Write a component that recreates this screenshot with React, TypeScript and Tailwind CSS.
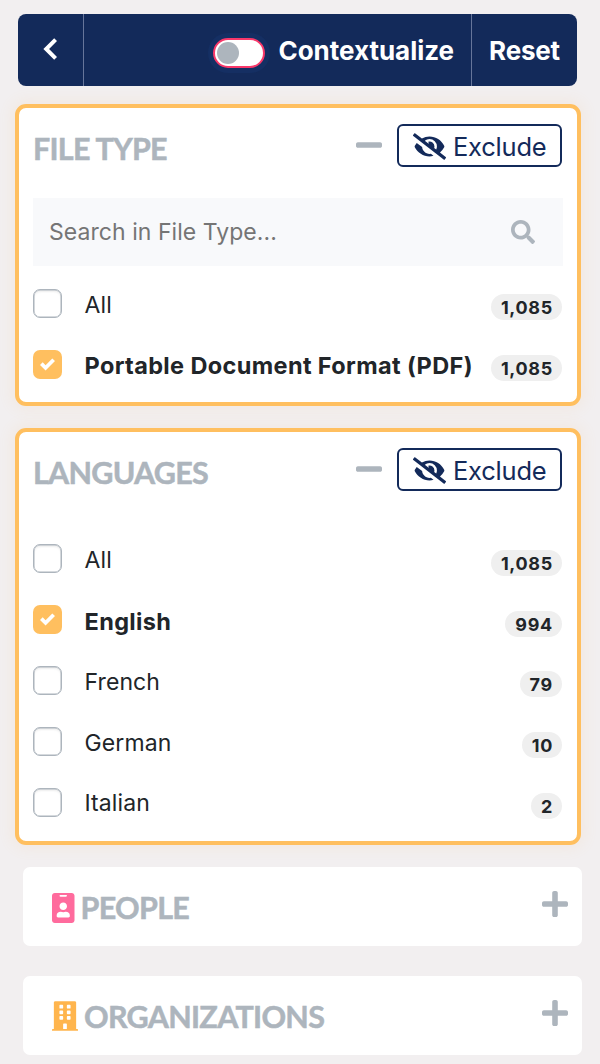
import React from 'react';
import { FaBuilding, FaEyeSlash, FaIdBadge, FaMinus, FaPlus, FaSearch } from 'react-icons/fa';

type Item = { label: string; count: string; checked?: boolean };

const fileTypes: Item[] = [
  { label: 'All', count: '1,085' },
  { label: 'Portable Document Format (PDF)', count: '1,085', checked: true },
];

const languages: Item[] = [
  { label: 'All', count: '1,085' },
  { label: 'English', count: '994', checked: true },
  { label: 'French', count: '79' },
  { label: 'German', count: '10' },
  { label: 'Italian', count: '2' },
];

function Toolbar() {
  return (
    <header className="ml-[18px] flex h-[72px] w-[559px] overflow-hidden rounded-[8px] bg-[#132a5a] text-[26px] font-bold text-white">
      <button className="flex w-[65px] items-center justify-center">
        <svg viewBox="0 0 14 22" className="mr-px mb-[2px] h-[22px] w-[14px]" fill="none">
          <path d="M12.6 1.6 3.2 11l9.4 9.4" stroke="currentColor" strokeWidth="4" />
        </svg>
      </button>
      <div className="flex flex-1 items-center justify-end border-x border-[#66759a] pr-[17px]">
        <span className="mt-[5px] mr-[13px] flex h-[30px] w-[52px] items-center rounded-full border-2 border-[#f9386a] bg-white pl-[2px] shadow-[0_0_0_5px_#152f63]">
          <span className="size-[22px] rounded-full bg-[#adb5bd]" />
        </span>
        <span className="mt-px tracking-[-0.02px]">Contextualize</span>
      </div>
      <button className="w-[105px] pt-px tracking-[-0.2px]">Reset</button>
    </header>
  );
}

function Row({ item }: { item: Item }) {
  return (
    <label className="flex h-[60.8px] items-center">
      {item.checked ? (
        <span className="flex size-[29px] items-center justify-center rounded-[7px] bg-[#ffbf5f]">
          <svg viewBox="0 0 8 8" className="size-[15px]">
            <path fill="#fff" d="M6.564.75 2.974 4.362 1.436 2.812 0 4.26 2.974 7.25 8 2.193z" />
          </svg>
        </span>
      ) : (
        <span className="size-[29px] rounded-[7px] border-[1.5px] border-[#adb5bd] bg-white shadow-[inset_0_0_0_0.5px_#adb5bd,inset_0_2px_2px_rgba(0,0,0,0.07)]" />
      )}
      <span
        className={
          item.checked
            ? 'mt-[3px] ml-[22.5px] text-[23.5px] font-bold tracking-[0.37px] whitespace-nowrap'
            : 'mt-[3px] ml-[22.5px] text-[23px] tracking-[0.1px] whitespace-nowrap'
        }
      >
        {item.label}
      </span>
      <span className="mt-[8px] mr-[0.5px] ml-auto flex h-[26px] items-center rounded-full bg-[#efefef] pr-[9px] pl-[10px] pt-px text-[18px] font-bold tracking-[0.7px]">
        {item.count}
      </span>
    </label>
  );
}

function PanelHeader({ title }: { title: string }) {
  return (
    <div className="flex h-[43px] items-center">
      <h2 className="mt-[5px] font-['Lato',sans-serif] text-[30.5px] leading-none font-bold tracking-[-0.75px] text-[#adb5bd] [-webkit-text-stroke:0.5px_#adb5bd]">
        {title}
      </h2>
      <FaMinus className="mb-px ml-auto h-[32px] w-[26px] text-[#adb5bd]" />
      <button className="mr-[0.5px] ml-[15px] flex h-[43px] w-[165.5px] items-center justify-center gap-[7px] rounded-[6px] border-2 border-[#132a5a] pl-px text-[25.5px] tracking-[-0.2px] text-[#132a5a]">
        <FaEyeSlash className="mt-[2px] h-[27px] w-[33px]" />
        <span className="mt-[3px]">Exclude</span>
      </button>
    </div>
  );
}

function Panel({ className, children }: { className: string; children: React.ReactNode }) {
  return (
    <section
      className={`ml-[14.5px] w-[566.5px] rounded-[11px] border-4 border-[#ffbf5f] bg-white px-[14.5px] shadow-[0_0_14px_4px_rgba(255,191,95,0.09)] ${className}`}
    >
      {children}
    </section>
  );
}

function Collapsed({ title, icon }: { title: string; icon: React.ReactNode }) {
  return (
    <section className="ml-[23px] flex h-[79px] w-[559px] items-center rounded-[7px] bg-white pr-[14px] pl-[29px]">
      {icon}
      <h2 className="mt-[2px] font-['Lato',sans-serif] text-[30.5px] leading-none font-bold tracking-[-0.7px] text-[#adb5bd] [-webkit-text-stroke:0.5px_#adb5bd]">
        {title}
      </h2>
      <FaPlus className="mb-[5px] ml-auto h-[32px] w-[26px] text-[#adb5bd]" />
    </section>
  );
}

export default function App() {
  return (
    <main className="h-[1064px] w-[600px] overflow-hidden bg-[#f2eff0] pt-[14px] font-['Inter',sans-serif] text-[#212529]">
      <Toolbar />
      <Panel className="mt-[18px] h-[302px] pt-[16px]">
        <PanelHeader title="FILE TYPE" />
        <div className="mt-[31px] mb-[7px] flex h-[68px] items-center justify-between bg-[#f8f9fb] pr-[28px] pl-[16px]">
          <span className="mt-px text-[23px] tracking-[0.05px] text-[#757575]">
            Search in File Type...
          </span>
          <FaSearch className="size-[24px] text-[#adb5bd]" />
        </div>
        {fileTypes.map((item) => (
          <Row key={item.label} item={item} />
        ))}
      </Panel>
      <Panel className="mt-[22px] h-[417px] pt-[16px]">
        <PanelHeader title="LANGUAGES" />
        <div className="mt-[37.5px]">
          {languages.map((item) => (
            <Row key={item.label} item={item} />
          ))}
        </div>
      </Panel>
      <div className="mt-[22px] flex flex-col gap-[29.5px]">
        <Collapsed
          title="PEOPLE"
          icon={<FaIdBadge className="mt-[2px] mr-[6px] h-[30px] w-[22.5px] text-[#ff6b9d]" />}
        />
        <Collapsed
          title="ORGANIZATIONS"
          icon={<FaBuilding className="mt-[2px] mr-[6px] h-[30px] w-[26px] text-[#ffb54d]" />}
        />
      </div>
    </main>
  );
}
